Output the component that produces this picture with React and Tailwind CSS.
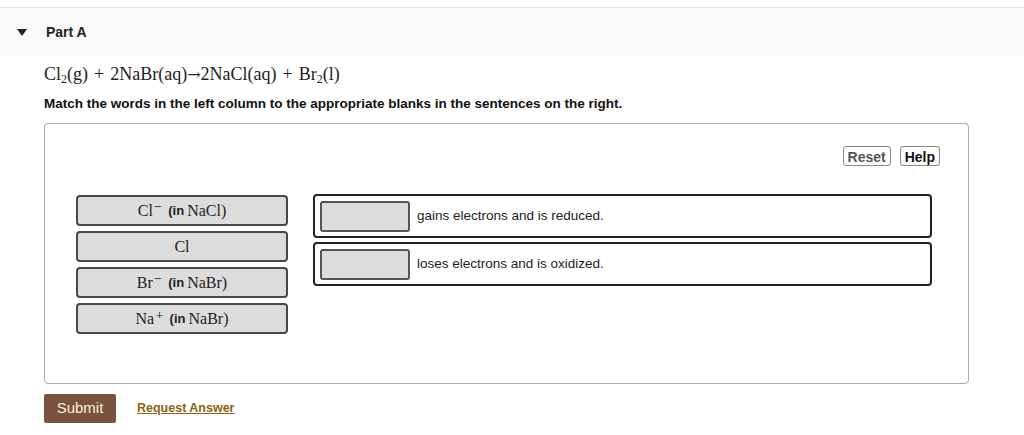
import { useState } from "react";

const sans = { fontFamily: '"Liberation Sans", Arial, sans-serif' };
const serif = { fontFamily: '"Liberation Serif", "Times New Roman", serif' };
const arrowFont = { fontFamily: '"DejaVu Serif", serif' };

const Sup = ({ children }) => (
  <sup className="text-[10px] -top-[6px] ml-[1px]" style={arrowFont}>{children}</sup>
);

const words = [
  { key: "cl-", main: <>Cl<Sup>−</Sup></>, tail: "NaCl)" },
  { key: "cl", main: <>Cl</>, tail: null },
  { key: "br-", main: <>Br<Sup>−</Sup></>, tail: "NaBr)" },
  { key: "na+", main: <>Na<Sup>+</Sup></>, tail: "NaBr)" },
];

const sentences = ["gains electrons and is reduced.", "loses electrons and is oxidized."];

const Plus = () => <span className="mx-[6px]">+</span>;

const App = () => {
  const [open, setOpen] = useState(true);

  return (
    <div className="w-[1024px] h-[435px] bg-white overflow-hidden" style={sans}>
      {/* HEADER */}
      <div className="pt-[7px]">
        <div className="border-t border-[#e2e2e2] bg-[#f9f9f9] h-[49px] flex items-center">
          <button onClick={() => setOpen(!open)} className="ml-[17px] w-[10px] flex justify-center">
            <svg width="10" height="7" viewBox="0 0 10 7">
              <path d="M0 0 L10 0 L5 7 Z" fill="#222" />
            </svg>
          </button>
          <span className="ml-[19px] text-[14px] font-bold text-[#222]">Part A</span>
        </div>
      </div>

      <div className="pl-[44px]">
        {/* EQUATION */}
        <div className="mt-[8px] text-[18px] text-[#222] leading-[21px]" style={serif}>
          Cl<sub className="text-[12px]">2</sub>(g)<Plus />2NaBr(aq)<span style={arrowFont} className="text-[16px]">→</span>2NaCl(aq)<Plus />Br<sub className="text-[12px]">2</sub>(l)
        </div>

        <p className="mt-[10px] text-[13.5px] leading-[18px] font-bold text-[#111]">
          Match the words in the left column to the appropriate blanks in the sentences on the right.
        </p>

        {/* MATCH BOX */}
        <div className="mt-[10px] w-[925px] h-[261px] border border-[#aaa] rounded-[4px]">
          <div className="flex justify-end gap-[9px] pr-[28px] pt-[22px]">
            <button className="h-[20px] px-[4px] border border-[#888] rounded-[3px] bg-white text-[14px] font-bold text-[#555]">
              Reset
            </button>
            <button className="h-[20px] px-[4px] border border-[#888] rounded-[3px] bg-white text-[14px] font-bold text-[#111]">
              Help
            </button>
          </div>

          <div className="flex pl-[31px] pt-[29px]">
            {/* LEFT WORDS */}
            <div className="flex flex-col gap-[5px] w-[212px]">
              {words.map((w) => (
                <div
                  key={w.key}
                  className="h-[31px] bg-[#dcdcdc] border-2 border-[#4a4646] rounded-[4px] flex items-center justify-center gap-[6px] text-[#222]"
                >
                  <span className="text-[16px]" style={serif}>{w.main}</span>
                  {w.tail && (
                    <span className="flex items-center gap-[3px]">
                      <span className="text-[13px] font-bold">(in</span>
                      <span className="text-[16px]" style={serif}>{w.tail}</span>
                    </span>
                  )}
                </div>
              ))}
            </div>

            {/* RIGHT SENTENCES */}
            <div className="ml-[25px] flex flex-col gap-[4px] -mt-[1px]">
              {sentences.map((s) => (
                <div
                  key={s}
                  className="w-[619px] h-[44px] border-2 border-[#222] rounded-[4px] flex items-center pl-[5px]"
                >
                  <div className="w-[90px] h-[31px] bg-[#dcdcdc] border-2 border-[#555] rounded-[3px]" />
                  <span className="ml-[7px] text-[13.5px] text-[#222]">{s}</span>
                </div>
              ))}
            </div>
          </div>
        </div>

        {/* FOOTER */}
        <div className="mt-[10px] flex items-center">
          <button className="w-[72px] h-[29px] bg-[#7a5240] rounded-[2px] text-[15px] text-[#fdf3dc]">
            Submit
          </button>
          <a href="#" className="ml-[21px] text-[12.5px] font-bold underline text-[#8a6410]">
            Request Answer
          </a>
        </div>
      </div>
    </div>
  );
};

export default App;
